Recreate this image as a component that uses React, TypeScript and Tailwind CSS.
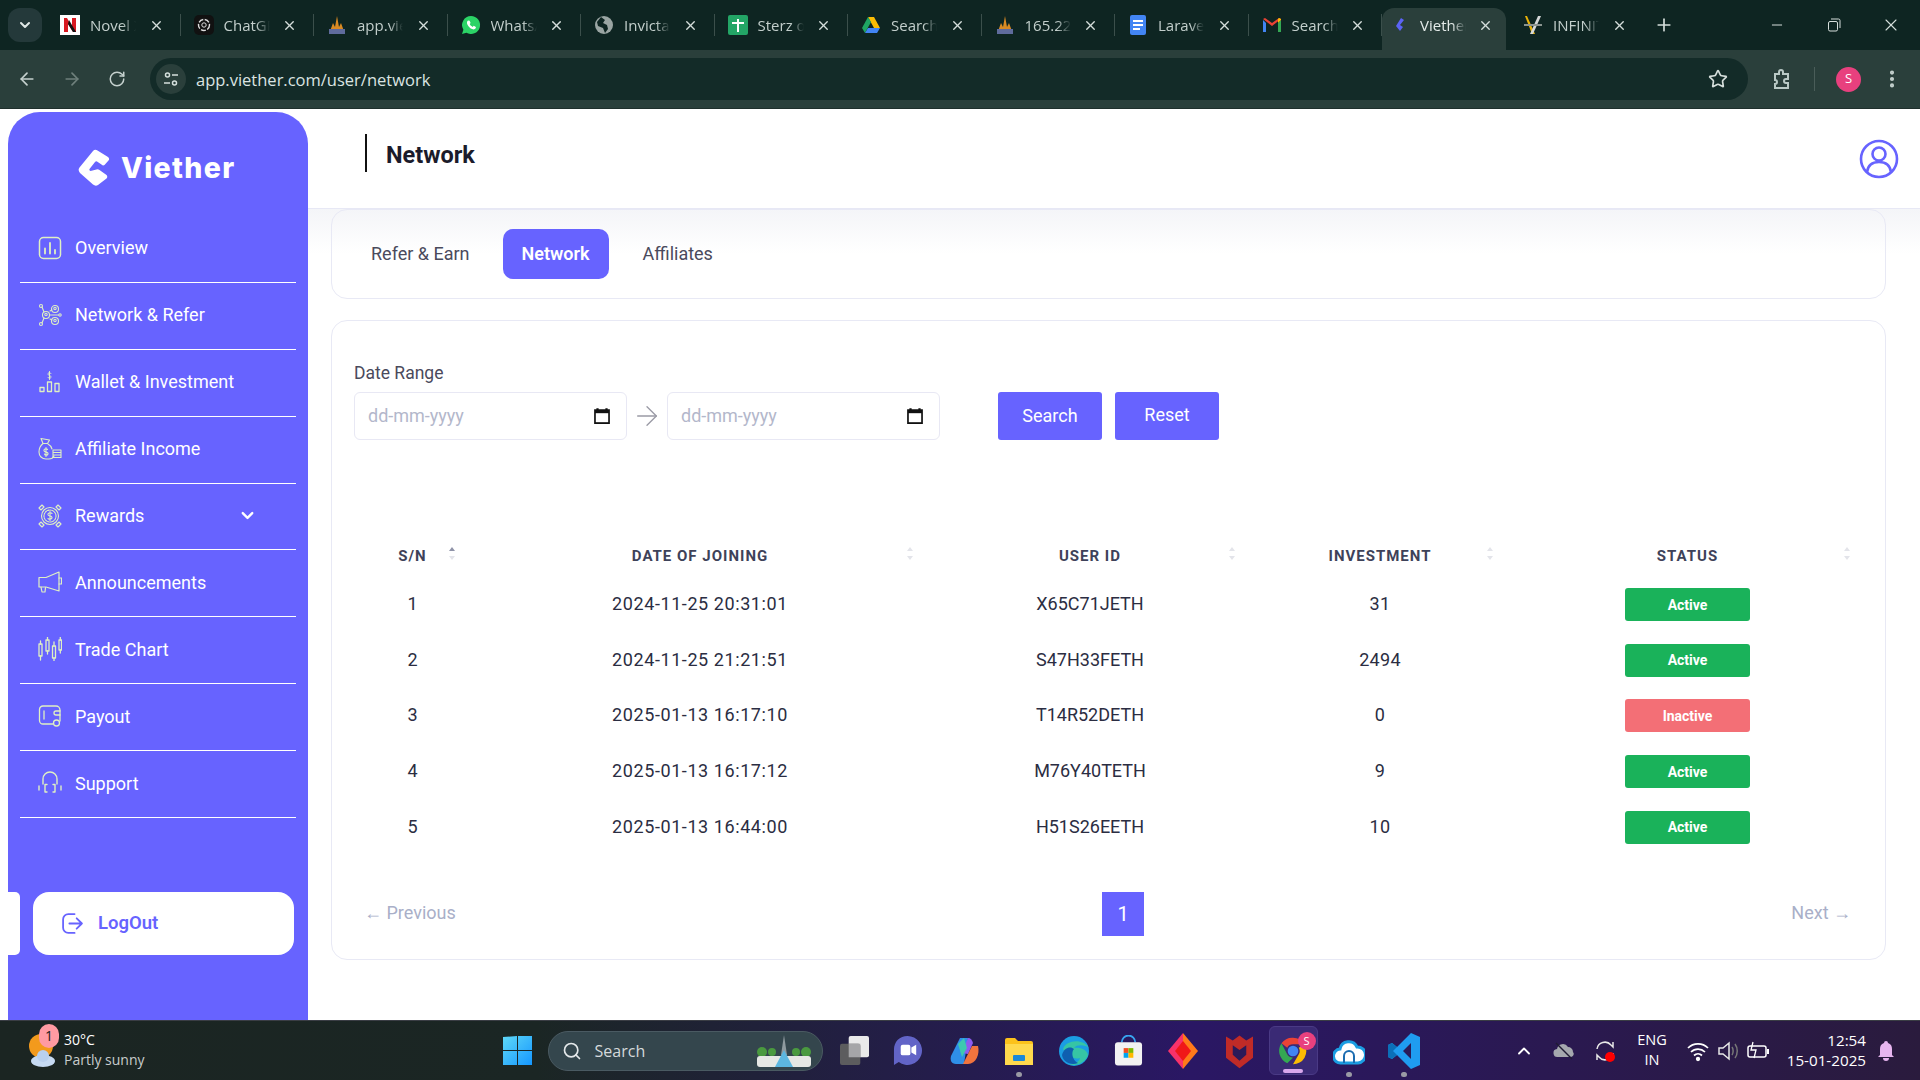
import type {JSX, ReactNode} from "react";
import {ArrowLeft, ArrowRight, ChevronDown, ChevronUp, EllipsisVertical, Minus, Plus, RotateCw, Search, Star, X} from "lucide-react";

const font = "font-['Roboto','Noto_Sans',sans-serif]";
const chromeFont = "font-['Open_Sans','Noto_Sans',sans-serif]";

interface TabItem {
    title: string;
    icon: JSX.Element;
    active?: boolean;
}

function Favicon({children}: {children: ReactNode}) {
    return <svg viewBox="0 0 20 20" className="w-5 h-5 shrink-0">{children}</svg>;
}

const towerIcon = (
    <Favicon>
        <path d="M2 19L6 8l2 4 2-11 2 11 2-4 4 11z" fill="#d98a23"/>
        <rect x="2" y="14" width="16" height="5" fill="#5f6b9c"/>
    </Favicon>
);

const tabs: TabItem[] = [
    {title: "Novel X", icon: <Favicon><rect width="20" height="20" fill="#fff"/><path d="M4 17V3h3l5 9V3h4v14h-3L8 9v8z" fill="#d81820"/><path d="M8 9l5 8h3L9 5z" fill="#111"/></Favicon>},
    {title: "ChatGPT", icon: <Favicon><rect width="20" height="20" rx="5" fill="#111"/><circle cx="10" cy="10" r="5.5" fill="none" stroke="#ddd" strokeWidth="1.4" strokeDasharray="5 1.5"/><circle cx="10" cy="10" r="2.2" fill="none" stroke="#ddd"/></Favicon>},
    {title: "app.viether.com", icon: towerIcon},
    {title: "WhatsApp", icon: <Favicon><path d="M10 1a9 9 0 00-7.6 13.7L1 19l4.4-1.3A9 9 0 1010 1z" fill="#2bd366"/><path d="M7 5.5c-1 .8-1.4 2.2-.6 3.9 1 2.2 2.7 3.8 4.8 4.7 1.5.6 2.8.2 3.5-.9l.2-1.3-2.2-1.1-1 1.1c-1.3-.5-2.4-1.5-3-2.8l.9-1-1-2.4z" fill="#fff"/></Favicon>},
    {title: "Invicta", icon: <Favicon><circle cx="10" cy="10" r="9" fill="#9aa5a3"/><path d="M7 2l4 3-2 3 4 2 1 4-3 4-2-5-5-2-1-4z" fill="#0e2522"/></Favicon>},
    {title: "Sterz of", icon: <Favicon><rect width="20" height="20" rx="2" fill="#23a566"/><path d="M9 4h2v3h5v2h-5v8H9V9H4V7h5z" fill="#fff"/></Favicon>},
    {title: "Search", icon: <Favicon><path d="M7 2h6l6 11h-6z" fill="#fbbc04"/><path d="M7 2l-6 11 3 5 6-11z" fill="#1fa463"/><path d="M4 18h12l3-5H7z" fill="#4285f4"/></Favicon>},
    {title: "165.22", icon: towerIcon},
    {title: "Laravel", icon: <Favicon><rect x="2" width="16" height="20" rx="2" fill="#4285f4"/><path d="M5 5h10v2H5zM5 9h10v2H5zM5 13h7v2H5z" fill="#fff"/></Favicon>},
    {title: "Search", icon: <Favicon><path d="M1 5v12h3V8z" fill="#4285f4"/><path d="M16 8v9h3V5z" fill="#34a853"/><path d="M1 4l9 7 9-7-2-1-7 5-7-5z" fill="#ea4335"/><path d="M16 8l3-3V4l-2-1-1 1z" fill="#fbbc04"/></Favicon>},
    {title: "Viether", active: true, icon: <Favicon><path d="M11 3l3 2-4 5 3 2-3 4-4-5z" fill="#5b63f5"/></Favicon>},
    {title: "INFINITY", icon: <Favicon><path d="M4 1l8 18h-3L2 1z" fill="#eab308"/><path d="M15 1h3l-8 18H7z" fill="#d5d8d8"/><path d="M1 9h18v2H1z" fill="#8b9490"/></Favicon>},
];

function BrowserTab({tab, last}: {tab: TabItem; last: boolean}) {
    return (
        <div className={`h-[42px] shrink-0 relative flex items-center pb-[8px] ${tab.active ? "bg-[#2a3f3b] rounded-t-[12px] w-[124px] mr-[4px] pl-[8px] pr-[13px]" : "w-[133.5px] pl-[13px] pr-[17px]"}`}>
            {tab.icon}
            <span className={`ml-[10px] w-[46px] overflow-hidden whitespace-nowrap text-[15px] [mask-image:linear-gradient(to_right,#000_70%,transparent)] ${tab.active ? "text-[#e4ebe9]" : "text-[#c3cfcc]"}`}>{tab.title}</span>
            <X className="ml-auto w-[15px] h-[15px] text-[#d5dedb]" strokeWidth={2.2}/>
            {!last && !tab.active && <span className="absolute right-0 top-[6px] h-[22px] w-px bg-[#3b4f4b]"/>}
        </div>
    );
}

function BrowserChrome() {
    return (
        <div className={`shrink-0 ${chromeFont}`}>
            <div className="h-[50px] bg-[#0e2522] flex items-end pl-[8px]">
                <div className="h-[34px] w-[34px] mb-[8px] rounded-[12px] bg-[#24393a] flex items-center justify-center text-[#e0e8e6]">
                    <ChevronDown className="w-4 h-4" strokeWidth={3}/>
                </div>
                <div className="flex ml-[5px]">
                    {tabs.map((tab, i) => <BrowserTab key={i} tab={tab} last={i === tabs.length - 1}/>)}
                </div>
                <div className="h-[42px] pb-[8px] flex items-center ml-[10px] text-[#d5dedb]">
                    <Plus className="w-[20px] h-[20px]" strokeWidth={2}/>
                </div>
                <div className="h-[50px] ml-auto flex items-center text-[#d5dedb]">
                    <Minus className="w-[16px] h-[16px] mr-[42px]" strokeWidth={1.5}/>
                    <svg viewBox="0 0 14 14" className="w-[14px] h-[14px] mr-[40px]" fill="none" stroke="currentColor"><rect x="1.5" y="3.5" width="9" height="9.5" rx="1.5"/><path d="M4 1h7.5A1.5 1.5 0 0113 2.5V10"/></svg>
                    <X className="w-[20px] h-[20px] mr-[19px]" strokeWidth={1.3}/>
                </div>
            </div>
            <div className="h-[59px] bg-[#2a3f3b] flex items-center pl-[17px] pr-[17px] text-[#c5d1ce] border-b border-[#1f2f2c]">
                <ArrowLeft className="w-[20px] h-[20px]" strokeWidth={2}/>
                <ArrowRight className="w-[20px] h-[20px] ml-[25px] text-[#6f807c]" strokeWidth={2}/>
                <RotateCw className="w-[18px] h-[18px] ml-[26px]" strokeWidth={2}/>
                <div className="ml-[24px] h-[42px] flex-1 rounded-full bg-[#132b28] flex items-center pl-[6px] pr-[20px]">
                    <div className="w-[30px] h-[30px] rounded-full bg-[#2a3f3b] flex items-center justify-center">
                        <svg viewBox="0 0 16 16" className="w-4 h-4" fill="none" stroke="#d6e0dd" strokeWidth="1.5"><circle cx="4.5" cy="4" r="2"/><path d="M9 4h6M1 12h6"/><circle cx="11.5" cy="12" r="2"/></svg>
                    </div>
                    <span className="ml-[10px] pt-[2px] text-[16.5px] text-[#dbe4e2]">app.viether.com/user/network</span>
                    <Star className="ml-auto w-[20px] h-[20px] text-[#d5dedb]" strokeWidth={2}/>
                </div>
                <svg viewBox="0 0 24 24" className="w-[24px] h-[24px] ml-[22px]" fill="none" stroke="#b9c9c5" strokeWidth="2"><path d="M5 7h4V5a2 2 0 014 0v2h5v5h-2a2 2 0 000 4h2v5H5v-4a2 2 0 000-4z"/></svg>
                <span className="ml-[20px] w-px h-[24px] bg-[#4a5d59]"/>
                <div className="ml-[21px] w-[25px] h-[25px] rounded-full bg-[#e8407e] text-white text-[13px] flex items-center justify-center">S</div>
                <EllipsisVertical className="ml-[20px] w-[22px] h-[22px] text-[#c5d1ce]" strokeWidth={2.5}/>
            </div>
        </div>
    );
}

function MenuSvg({children}: {children: ReactNode}) {
    return <svg viewBox="0 0 24 24" className="w-6 h-6 shrink-0" fill="none" stroke="#dff0c4" strokeWidth="1.1" strokeLinecap="round" strokeLinejoin="round">{children}</svg>;
}

const menu: {label: string; icon: JSX.Element; chevron?: boolean}[] = [
    {label: "Overview", icon: <MenuSvg><rect x="1.5" y="1.5" width="21" height="21" rx="4" strokeWidth="1.5"/><path d="M7 12.5v5M12 7v10.5M17 14v3.5" strokeWidth="1.8"/></MenuSvg>},
    {label: "Network & Refer", icon: <MenuSvg><circle cx="3" cy="3" r="1.5"/><circle cx="3" cy="21" r="1.5"/><circle cx="17" cy="6" r="3.5"/><circle cx="17" cy="18" r="3.5"/><circle cx="8" cy="12" r="3.5"/><circle cx="22" cy="12" r="1.2"/><circle cx="17" cy="5.5" r="1.2"/><circle cx="17" cy="17.5" r="1.2"/><circle cx="8" cy="11.5" r="1.2"/><path d="M4 4l2 5M4 20l2-5M11.5 12h9M12 8l2-1M12 16l2 1"/></MenuSvg>},
    {label: "Wallet & Investment", icon: <MenuSvg><path d="M2 17.5h4v4H2zM9.5 12h4v9.5h-4zM17 13.5h4v8h-4z" strokeWidth="1.3"/><path d="M13 3.5c-.5-1-2.5-1-3 0s.5 1.5 1.5 2 2 1 1.500 2-2.5 1-3 0M11.5 1.5v8" strokeWidth="1"/></MenuSvg>},
    {label: "Affiliate Income", icon: <MenuSvg><path d="M3 1.5l8.5 1.5-2 3.5H5z"/><path d="M5 6.5C2 9 1 12 1 15c0 4 3 7 7 7h3c3 0 4-1 5-3M10 7c2 1 3.5 3 4 5"/><path d="M9.5 12.5c-.5-1-3-1-3.5.5s1.5 2 2 2 2.5.5 2 2-3 1.5-3.5 0M8 10.5v9"/><path d="M15 13h8v2.5h-8zM15 15.5h8V18h-8zM15 18h8v2.5h-8z"/></MenuSvg>},
    {label: "Rewards", chevron: true, icon: <MenuSvg><circle cx="12" cy="12" r="8.5"/><circle cx="12" cy="12" r="6" strokeDasharray="1.5 1"/><path d="M14 9.5c-.5-1-3.5-1-4 .5s1.5 1.8 2 2 2.5.7 2 2-3.5 1.5-4 .5M12 7.5v9"/><path d="M4 1l-3 3 2 2 3-3zM20 1l3 3-2 2-3-3zM4 23l-3-3 2-2 3 3zM20 23l3-3-2-2-3 3z"/></MenuSvg>},
    {label: "Announcements", icon: <MenuSvg><path d="M1 7.5h7L21 2v19L8 17H1z" strokeWidth="1.2"/><path d="M21 8h2.5v6H21M3 17l1 5h3l.5-4.5" strokeWidth="1.2"/></MenuSvg>},
    {label: "Trade Chart", icon: <MenuSvg><path d="M1 7h3v12H1zM8 3h3v11H8zM14.5 9h3v12h-3zM21 3h2.5v10H21z" strokeWidth="1.3"/><path d="M2.5 4v3M2.5 19v4M9.5 0v3M9.5 14v3M16 5v4M16 21v3M22.3 0v3M22.3 13v3" strokeWidth="1.3"/></MenuSvg>},
    {label: "Payout", icon: <MenuSvg><path d="M15 20H5a3.5 3.5 0 01-3.5-3.5v-11A3.5 3.5 0 015 2h13a4 4 0 014 4v11" strokeWidth="1.3"/><path d="M6 7v8M22 7h-4a2 2 0 000 4h4" strokeWidth="1.3"/><circle cx="18.5" cy="19" r="3" strokeWidth="1.3"/></MenuSvg>},
    {label: "Support", icon: <MenuSvg><path d="M5 13V8a7 7 0 0114 0v5" strokeWidth="1.4"/><path d="M9 13.5H7V21h2M15 21h2v-7.5h-2M1 15v4M23 15v4" strokeWidth="1.4"/></MenuSvg>},
];

function Sidebar() {
    return (
        <aside className="w-[300px] ml-[8px] mt-[3px] shrink-0 rounded-t-[32px] bg-[#6763ff] flex flex-col relative">
            <div className="h-[104px] shrink-0 flex items-start pt-[37px] pl-[70px]">
                <svg viewBox="0 0 32 37" className="w-[32px] h-[37px] shrink-0">
                    <path d="M15 2Q17 0 19.5 1.5L30 8Q32 9.5 30.5 11.5L26.5 16Q25 17 23.5 15.5L19 12.5Q18 12 17 13L11.5 20Q11 21.500 12.5 22L18.5 20.5Q20 20 21.5 21L28.5 26Q30 27.5 28.5 29.5L20 36Q17.5 37.500 15 35.5L2 24Q-.5 21 1.5 18.5Z" fill="#fff"/>
                </svg>
                <span className="ml-[11px] text-white text-[28.5px] leading-[38px] font-extrabold tracking-[1.3px] font-['Inter',sans-serif]">Viether</span>
            </div>
            <nav className={`mx-[12px] ${font}`}>
                {menu.map(item => (
                    <div key={item.label} className="h-[66.9px] border-b border-white flex items-center pl-[18px] pr-[39px] pb-[2px]">
                        {item.icon}
                        <span className="ml-[13px] text-[18px] text-white">{item.label}</span>
                        {item.chevron && <ChevronDown className="ml-auto w-[19px] h-[19px] text-white" strokeWidth={3}/>}
                    </div>
                ))}
            </nav>
            <div className={`mt-[74px] flex items-stretch h-[63px] ${font}`}>
                <span className="w-[12px] bg-white rounded-r-[5px]"/>
                <div className="ml-[13px] w-[261px] rounded-[16px] bg-white flex items-center pl-[29px] text-[#6763ff]">
                    <svg viewBox="0 0 20 22" className="w-[21px] h-[23px]" fill="none" stroke="#6763ff" strokeWidth="1.7" strokeLinecap="round" strokeLinejoin="round"><path d="M12 2H6a5 5 0 00-5 5v8a5 5 0 005 5h6"/><path d="M7 11h12M14 6l5 5-5 5"/></svg>
                    <span className="ml-[15px] text-[18.5px] font-semibold">LogOut</span>
                </div>
            </div>
        </aside>
    );
}

function SortIcon({active}: {active: boolean}) {
    return (
        <span className="absolute right-[16px] top-[12px] flex flex-col gap-[5px]">
            <span className={`w-0 h-0 border-x-[3px] border-x-transparent border-b-[4px] ${active ? "border-b-[#8f93a8]" : "border-b-[#e3e4ea]"}`}/>
            <span className="w-0 h-0 border-x-[3px] border-x-transparent border-t-[4px] border-t-[#e3e4ea]"/>
        </span>
    );
}

function DateBox() {
    return (
        <div className="w-[273px] h-[48px] rounded-[6px] border border-[#e8e8f4] bg-white flex items-center pl-[13px] pr-[15px]">
            <span className="pb-[1px] text-[18px] text-[#b3b7cb]">dd-mm-yyyy</span>
            <svg viewBox="0 0 16 16" className="ml-auto w-[18px] h-[18px]"><path d="M3 1h2v1h6V1h2v1h2v13H1V2h2z" fill="#111"/><rect x="2.5" y="5.5" width="11" height="8" fill="#fff"/></svg>
        </div>
    );
}

const rows = [
    {sn: 1, date: "2024-11-25 20:31:01", id: "X65C71JETH", amount: 31, active: true},
    {sn: 2, date: "2024-11-25 21:21:51", id: "S47H33FETH", amount: 2494, active: true},
    {sn: 3, date: "2025-01-13 16:17:10", id: "T14R52DETH", amount: 0, active: false},
    {sn: 4, date: "2025-01-13 16:17:12", id: "M76Y40TETH", amount: 9, active: true},
    {sn: 5, date: "2025-01-13 16:44:00", id: "H51S26EETH", amount: 10, active: true},
];

function NetworkTable() {
    const headers = ["S/N", "DATE OF JOINING", "USER ID", "INVESTMENT", "STATUS"];
    return (
        <table className="mt-[95px] table-fixed w-[1512px] border-collapse">
            <colgroup>
                <col className="w-[117px]"/>
                <col className="w-[458px]"/>
                <col className="w-[322px]"/>
                <col className="w-[258px]"/>
                <col className="w-[357px]"/>
            </colgroup>
            <thead>
                <tr className="h-[41px]">
                    {headers.map((h, i) => (
                        <th key={h} className="relative pt-[1px] text-center text-[15px] font-bold tracking-[1px] text-[#3e4259]">
                            {h}
                            <SortIcon active={i === 0}/>
                        </th>
                    ))}
                </tr>
            </thead>
            <tbody>
                {rows.map(row => (
                    <tr key={row.sn} className="h-[55.6px] text-center text-[18px] text-[#2b2d42]">
                        <td>{row.sn}</td>
                        <td className="tracking-[0.58px]">{row.date}</td>
                        <td>{row.id}</td>
                        <td className="tracking-[0.3px]">{row.amount}</td>
                        <td>
                            <span className={`mx-auto mt-[2px] pt-[1px] flex items-center justify-center w-[125px] h-[33px] rounded-[3px] text-[14px] font-bold text-white ${row.active ? "bg-[#1ab25a]" : "bg-[#f36f76]"}`}>
                                {row.active ? "Active" : "Inactive"}
                            </span>
                        </td>
                    </tr>
                ))}
            </tbody>
        </table>
    );
}

function MainContent() {
    return (
        <main className={`flex-1 min-w-0 flex flex-col ${font}`}>
            <header className="h-[100px] shrink-0 bg-white border-b border-[#e7e8f5] flex items-center pl-[57px] pr-[21px] pb-[11px]">
                <span className="w-[2px] h-[38px] bg-[#111]"/>
                <h1 className="ml-[19px] mt-[5px] text-[23.5px] font-bold text-[#1b1b2b]">Network</h1>
                <svg viewBox="0 0 40 40" className="ml-auto w-[40px] h-[40px] mt-[11px]" fill="none" stroke="#6763ff" strokeWidth="2.6"><circle cx="20" cy="20" r="18"/><circle cx="20" cy="15" r="6.5"/><path d="M8 33c1-7 6-10 12-10s11 3 12 10"/></svg>
            </header>
            <div className="flex-1 pl-[23px] pr-[34px] bg-linear-to-b from-[#f4f5f8] to-white to-[45px]">
                <div className="h-[90px] rounded-[16px] border border-[#e8e9f5] flex items-center pl-[19px] text-[18px] text-[#4a4a5c]">
                    <span className="px-[20px] pb-[2px]">Refer &amp; Earn</span>
                    <span className="ml-[13px] w-[106px] h-[50px] pb-[2px] rounded-[10px] bg-[#6763ff] text-white font-semibold flex items-center justify-center">Network</span>
                    <span className="ml-[14px] px-[20px] pb-[2px]">Affiliates</span>
                </div>
                <div className="mt-[21px] h-[640px] rounded-[16px] border border-[#e8e9f5] bg-white pl-[22px] pt-[40px] pr-[20px]">
                    <div className="text-[17.5px] leading-[24px] text-[#4a4a5c] mb-[7px]">Date Range</div>
                    <div className="flex items-center">
                        <DateBox/>
                        <ArrowRight className="w-[32px] h-[32px] mx-[4px] text-[#9a9aa5]" strokeWidth={1}/>
                        <DateBox/>
                        <button className="ml-[58px] w-[104px] h-[48px] pb-[2px] rounded-[3px] bg-[#6763ff] text-white text-[18px]">Search</button>
                        <button className="ml-[13px] w-[104px] h-[48px] pb-[3px] rounded-[3px] bg-[#6763ff] text-white text-[18px]">Reset</button>
                    </div>
                    <NetworkTable/>
                    <div className="mt-[38px] flex items-center pl-[10px] pr-[14px] text-[18px] text-[#a9afc8]">
                        <span className="w-[738px] pb-[2px]"><span className="font-['Liberation_Sans',sans-serif]">←</span> Previous</span>
                        <span className="w-[42px] h-[44px] bg-[#6763ff] text-white text-[20px] flex items-center justify-center">1</span>
                        <span className="ml-auto pb-[2px]">Next <span className="font-['Liberation_Sans',sans-serif]">→</span></span>
                    </div>
                </div>
            </div>
        </main>
    );
}

function TrayDot() {
    return <span className="absolute bottom-[3px] left-1/2 -ml-[3px] w-[6px] h-[5px] rounded-full bg-[#9a9aa5]"/>;
}

function Taskbar() {
    return (
        <footer className={`h-[60px] shrink-0 border-t border-[#3a3d44] bg-[linear-gradient(to_right,#1b2522_0%,#1b2624_28%,#2a1764_62%,#2a1b3d_100%)] flex items-center text-white ${chromeFont}`}>
            <div className="relative ml-[28px] w-[28px] h-[36px] shrink-0">
                <svg viewBox="0 0 28 36" className="w-[28px] h-[36px]"><circle cx="13" cy="13" r="12" fill="#f39a1c"/><ellipse cx="15" cy="28" rx="12" ry="6" fill="#c6daf2"/><circle cx="15" cy="23" r="6" fill="#b9d0ee"/></svg>
                <span className="absolute -top-[9px] left-[11px] w-[20px] h-[24px] rounded-full bg-[#ff9aa2] text-[#1b1b1b] text-[14px] flex items-center justify-center">1</span>
            </div>
            <div className="ml-[8px] mb-[2px] text-[14px] leading-[20px] shrink-0">
                <div>30°C</div>
                <div className="text-[#c8cccc]">Partly sunny</div>
            </div>
            <svg viewBox="0 0 29 29" className="ml-[358px] w-[29px] h-[29px] shrink-0">
                <defs><linearGradient id="winLogo" x1="0" y1="0" x2="1" y2="1"><stop offset="0" stopColor="#5fd8f7"/><stop offset="1" stopColor="#1597ff"/></linearGradient></defs>
                <path d="M0 1l14-1v14H0zM15 0h14v14H15zM0 15h14v14H0zM15 15h14v14H15z" fill="url(#winLogo)"/>
            </svg>
            <div className="ml-[16px] w-[275px] h-[40px] rounded-full bg-[#34464d] border border-[#4a5a62] flex items-center pl-[13px] relative shrink-0">
                <Search className="w-[20px] h-[20px] text-[#e4e8ea]" strokeWidth={2}/>
                <span className="ml-[13px] text-[16px] text-[#d5d9db]">Search</span>
                <svg viewBox="0 0 60 34" className="ml-auto mr-[8px] w-[60px] h-[34px]"><circle cx="8" cy="18" r="5" fill="#4a9a3f"/><circle cx="52" cy="18" r="5" fill="#4a9a3f"/><circle cx="18" cy="18" r="4" fill="#4a9a3f"/><circle cx="42" cy="18" r="4" fill="#4a9a3f"/><rect x="3" y="22" width="54" height="11" rx="3" fill="#e6e8e4"/><path d="M30 1l3 20h-6z" fill="#8f9a9f"/><path d="M30 16l9 17H21z" fill="#5cb7e0"/></svg>
            </div>
            <div className="ml-[17px] flex items-center shrink-0">
                <svg viewBox="0 0 30 30" className="w-[29px] h-[29px]"><rect x="9" width="21" height="22" rx="2" fill="#e9e9ea"/><rect y="8" width="21" height="22" rx="2" fill="#5c5c5e"/><rect x="9" y="8" width="12" height="14" fill="#a5a5a8"/></svg>
                <svg viewBox="0 0 30 32" className="ml-[24px] w-[29px] h-[31px]"><path d="M15 1C7 1 1 7 1 15v16l5-3a15 15 0 109-27z" fill="#6264c7"/><rect x="8" y="10" width="10" height="11" rx="2" fill="#fff"/><path d="M19 13l5-3v11l-5-3z" fill="#fff"/></svg>
                <svg viewBox="0 0 30 30" className="ml-[28px] w-[30px] h-[30px]"><path d="M10 2h8L14 28H6c-5 0-6-4-5-8z" fill="#2f8fe8"/><path d="M18 2c3 0 4 2 5 5l-5 11-6-1z" fill="#8e5cf0"/><path d="M22 10h6c2 8-2 18-10 18h-5z" fill="#f0743e"/><path d="M8 8l6-6 3 10-5 9z" fill="#3ec9b0"/></svg>
                <div className="relative ml-[24px] w-[30px] h-[58px] flex items-center">
                    <svg viewBox="0 0 30 30" className="w-[30px] h-[30px]"><path d="M1 4a2 2 0 012-2h8l3 3h13a2 2 0 012 2v21H1z" fill="#fcc21b"/><rect x="1" y="8" width="28" height="21" fill="#ffd94d"/><rect x="9" y="19" width="12" height="6" rx="1" fill="#1a88d8"/></svg>
                    <TrayDot/>
                </div>
                <svg viewBox="0 0 32 32" className="ml-[24px] w-[32px] h-[32px]"><circle cx="16" cy="16" r="15" fill="#1b9de2"/><path d="M5 14c3-9 20-11 26-1-3-3-12-4-15 0 5-1 13 1 14 7-3 8-12 12-19 9 5 0 10-2 11-6-6 2-12-2-17-9z" fill="#36c5a4"/><path d="M4 20C6 12 13 11 16 14c-3 3-2 11 4 14-7 3-15-1-16-8z" fill="#0f5fb0"/></svg>
                <svg viewBox="0 0 30 30" className="ml-[24px] w-[29px] h-[32px]"><path d="M8 6a7 7 0 0114 0" fill="none" stroke="#38a5f0" strokeWidth="1.8"/><rect x="1" y="6" width="28" height="24" rx="3" fill="#f2f2f2"/><path d="M10 12h5v5h-5z" fill="#f25022"/><path d="M15 12h5v5h-5z" fill="#7fba00"/><path d="M10 17h5v5h-5z" fill="#00a4ef"/><path d="M15 17h5v5h-5z" fill="#ffb900"/></svg>
                <svg viewBox="0 0 30 36" className="ml-[25px] w-[30px] h-[36px]"><path d="M15 0L0 18l15 18z" fill="#f8326a"/><path d="M15 0l15 18-15 18z" fill="#ff7a1a"/><path d="M15 8l8 10-8 10-8-10z" fill="#f01818"/></svg>
                <svg viewBox="0 0 28 36" className="ml-[28px] w-[27px] h-[36px]"><path d="M0 3l7 4 7-5 7 5 7-4v22L14 36 0 25z" fill="#c02b27"/><path d="M7 12l7 5 7-5v10l-7 6-7-6z" fill="#2a1a58"/></svg>
                <div className="relative ml-[16px] w-[49px] h-[49px] rounded-[6px] bg-[#3a2a75] border border-[#4a3a85] flex items-center justify-center">
                    <svg viewBox="0 0 48 48" className="w-[32px] h-[32px]"><path d="M24 4a20 20 0 0117.3 10H24a10 10 0 00-8.7 5L6.7 12.5A20 20 0 0124 4z" fill="#ea4335"/><path d="M41.3 14a20 20 0 01-17.3 30l8.7-15a10 10 0 000-10z" fill="#fbbc04"/><path d="M6.7 12.5L15.3 29A10 10 0 0024 34l-8.7 8.2A20 20 0 016.7 12.5z" fill="#34a853"/><circle cx="24" cy="24" r="8" fill="#4285f4"/></svg>
                    <span className="absolute top-[5px] right-[1px] w-[18px] h-[18px] rounded-full bg-[#e8407e] text-[11px] flex items-center justify-center">S</span>
                    <span className="absolute bottom-[1px] left-[13px] w-[20px] h-[4px] rounded-full bg-[#d9a8ec]"/>
                </div>
                <div className="relative ml-[15px] w-[32px] h-[58px] flex items-center">
                    <svg viewBox="0 0 32 30" className="w-[32px] h-[30px]"><path d="M8 27a7 7 0 01-1-14 9 9 0 0117-2 8 8 0 011 16z" fill="#fff" stroke="#1b9de2" strokeWidth="3"/><path d="M11 27v-7a5 5 0 0110 0v7" fill="none" stroke="#1b6cb0" strokeWidth="2"/></svg>
                    <TrayDot/>
                </div>
                <div className="relative ml-[23px] w-[32px] h-[58px] flex items-center">
                    <svg viewBox="0 0 32 36" className="w-[32px] h-[36px]"><path d="M23 0l9 4v28l-9 4L9 22l-5 4-4-2V12l4-2 5 4z" fill="#1f9cf0"/><path d="M23 10l-8 8 8 8z" fill="#2a1a58"/><path d="M0 12l4-2 5 4-4 4 4 4-5 4-4-2z" fill="#0b6fb8"/></svg>
                    <TrayDot/>
                </div>
            </div>
            <div className="ml-auto flex items-center pr-[26px] shrink-0">
                <ChevronUp className="w-[20px] h-[20px]" strokeWidth={2.2}/>
                <svg viewBox="0 0 22 16" className="ml-[19px] w-[22px] h-[18px]" fill="#a5a8ae"><path d="M5 14a4 4 0 01-1-8 6 6 0 0111-2 5 5 0 015 5 3 3 0 01-2 5z"/><path d="M3 0l16 16" stroke="#1f1a33" strokeWidth="1.5"/></svg>
                <svg viewBox="0 0 24 24" className="ml-[18px] w-[24px] h-[24px]" fill="none" stroke="#e8e8e8" strokeWidth="1.5"><path d="M4 10a8 8 0 0114-4l2 2V3M20 14a8 8 0 01-14 4l-2-2v5"/><circle cx="17" cy="18" r="5" fill="#ff0000" stroke="none"/></svg>
                <div className="ml-[18px] mb-[2px] w-[34px] text-center text-[14.5px] leading-[20px]"><div>ENG</div><div>IN</div></div>
                <svg viewBox="0 0 24 24" className="ml-[17px] w-[24px] h-[24px]" fill="none" stroke="#fff" strokeWidth="1.7"><path d="M2 9a14 14 0 0120 0M5 13a10 10 0 0114 0M8 16.5a6 6 0 018 0"/><circle cx="12" cy="20" r="1.3" fill="#fff"/></svg>
                <svg viewBox="0 0 24 24" className="ml-[6px] w-[24px] h-[24px]" fill="none" stroke="#e8e8e8" strokeWidth="1.5"><path d="M3 9h4l6-5v16l-6-5H3z"/><path d="M16 8c1.5 2 1.5 6 0 8M19 5c3 4 3 10 0 14" stroke="#777"/></svg>
                <svg viewBox="0 0 24 24" className="ml-[6px] w-[24px] h-[24px]" fill="none" stroke="#fff" strokeWidth="1.5"><rect x="2" y="7" width="18" height="11" rx="2"/><path d="M22 10v5" strokeWidth="2"/><path d="M7 3l-2 8h5l-2 8" strokeWidth="1.3"/></svg>
                <div className="ml-[12px] mb-[2px] w-[84px] text-right text-[15.2px] leading-[20px]"><div>12:54</div><div>15-01-2025</div></div>
                <svg viewBox="0 0 16 20" className="ml-[12px] w-[16px] h-[20px]" fill="#e7b5ef"><path d="M8 0a2 2 0 012 2c3 1 4 3 4 6v6l2 2H0l2-2V8c0-3 1-5 4-6a2 2 0 012-2z"/><path d="M5 17h6a3 3 0 01-6 0z"/></svg>
            </div>
        </footer>
    );
}

export default function App(): JSX.Element {
    return (
        <div className="w-[1920px] h-[1080px] overflow-hidden flex flex-col bg-white">
            <BrowserChrome/>
            <div className="flex-1 min-h-0 flex">
                <Sidebar/>
                <MainContent/>
            </div>
            <Taskbar/>
        </div>
    );
}
